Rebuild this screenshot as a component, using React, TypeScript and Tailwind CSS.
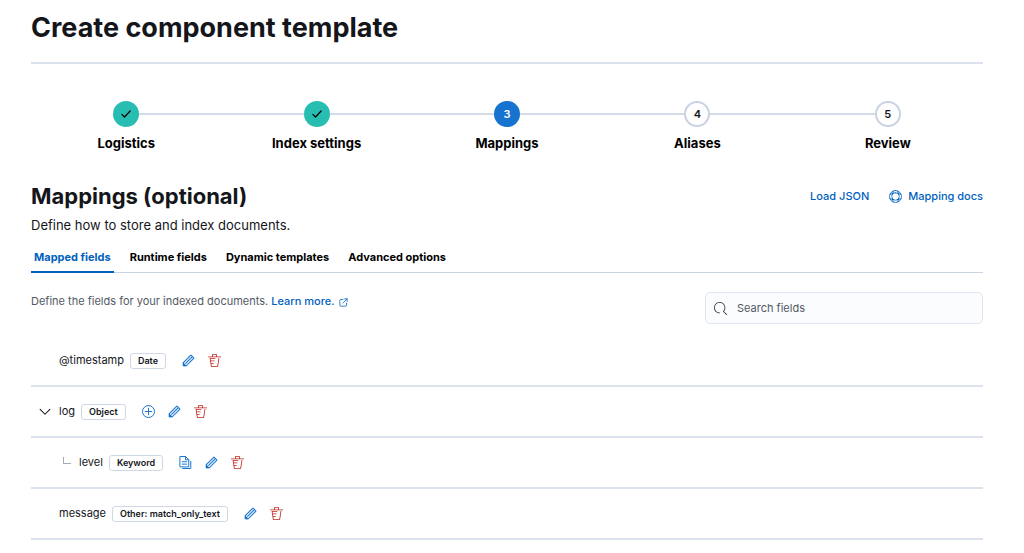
import { useState } from "react";

const paths = {
  trash:
    "M11 3h5v1H0V3h5V1a1 1 0 0 1 1-1h4a1 1 0 0 1 1 1v2zm-7.056 8H7v1H4.1l.392 2.519c.042.269.254.458.493.458h6.03c.239 0 .451-.189.493-.458l1.498-9.576H14l-1.504 9.73c-.116.747-.74 1.304-1.481 1.304h-6.03c-.741 0-1.365-.557-1.481-1.304l-1.511-9.73H9V5.95H3.157L3.476 8H8v1H3.632l.312 2zM6 3h4V1H6v2z",
  pencil:
    "M12.148 3.148L11 2l-9 9v3h3l9-9-1.144-1.144-8.002 7.998a.502.502 0 01-.708 0 .502.502 0 010-.708l8.002-7.998zM11 1c.256 0 .512.098.707.293l3 3a.999.999 0 010 1.414l-9 9A.997.997 0 015 15H2a1 1 0 01-1-1v-3c0-.256.098-.512.293-.707l9-9A.997.997 0 0111 1zM5 14H2v-3l3 3z",
  search:
    "M11.271 11.978l3.872 3.873a.502.502 0 00.708 0 .502.502 0 000-.708l-3.565-3.564c2.38-2.747 2.267-6.923-.342-9.532-2.73-2.73-7.17-2.73-9.898 0-2.728 2.729-2.728 7.17 0 9.9a6.955 6.955 0 004.949 2.05.5.5 0 000-1 5.96 5.96 0 01-4.242-1.757 6.01 6.01 0 010-8.486 6.004 6.004 0 018.484 0 6.01 6.01 0 010 8.486.5.5 0 00.034.738z",
};

const strokes = {
  plus: "M8 .6a7.4 7.4 0 1 0 0 14.8a7.4 7.4 0 1 0 0-14.8M8 4v8M4 8h8",
  documents: "M1.6.6h6.4l4 4v8.8H1.6zM8 .6v4h4M4 7h5.5M4 10h5.5M4.5 15.4h10V6.5",
  help: "M8 .6a7.4 7.4 0 1 0 0 14.8a7.4 7.4 0 1 0 0-14.8M8 3.4a4.6 4.6 0 1 0 0 9.2a4.6 4.6 0 1 0 0-9.2M5.2 1.4L4 5.5M1.4 5.2L5.5 4M10.8 1.4L12 5.5M14.6 5.2L10.5 4M5.2 14.6L4 10.5M1.4 10.8L5.5 12M10.8 14.6L12 10.5M14.6 10.8L10.5 12",
  popout: "M7 2.5H3A1.5 1.5 0 0 0 1.5 4v9A1.5 1.5 0 0 0 3 14.5h9a1.5 1.5 0 0 0 1.5-1.5V9M10 1.5h4.5V6M14.5 1.5L7 9",
  chevron: "M1.5 4.5L8 11l6.5-6.5",
  check: "M2.5 8.5l3.5 3.5 7.5-8",
};

function Icon({ name, className }: { name: keyof typeof paths; className: string }) {
  return (
    <svg
      viewBox="0 0 16 16"
      className={className}
      fill="currentColor"
      stroke="currentColor"
      strokeWidth={name === "pencil" ? 0.3 : 0}
      aria-hidden="true"
    >
      <path fillRule="evenodd" d={paths[name]} />
    </svg>
  );
}

function LineIcon({
  name,
  className,
  width = 1.2,
}: {
  name: keyof typeof strokes;
  className: string;
  width?: number;
}) {
  return (
    <svg
      viewBox="0 0 16 16"
      className={className}
      fill="none"
      stroke="currentColor"
      strokeWidth={width}
      strokeLinecap="round"
      strokeLinejoin="round"
      aria-hidden="true"
    >
      <path d={strokes[name]} />
    </svg>
  );
}

const steps = [
  { label: "Logistics", status: "complete" },
  { label: "Index settings", status: "complete" },
  { label: "Mappings", status: "current" },
  { label: "Aliases", status: "incomplete" },
  { label: "Review", status: "incomplete" },
];

const stepTones: Record<string, string> = {
  complete: "bg-[#27bdb1] text-black",
  current: "bg-[#1673cf] text-white",
  incomplete: "border-2 border-[#cad3e2] bg-white text-[#14161c]",
};

const tabs = ["Mapped fields", "Runtime fields", "Dynamic templates", "Advanced options"];

const fields = [
  { name: "@timestamp", type: "Date" },
  { name: "log", type: "Object", expandable: true },
  { name: "level", type: "Keyword", child: true },
  { name: "message", type: "Other: match_only_text" },
];

function Stepper() {
  return (
    <ol className="grid grid-cols-5 pt-[37px] text-black">
      {steps.map((step, i) => (
        <li key={step.label}>
          <button type="button" className="flex w-full flex-col items-center">
            <span className="flex w-full items-center">
              <span className={`h-0.5 flex-1 ${i > 0 ? "bg-[#d3dbe8]" : ""}`} />
              <span
                className={`flex size-[26px] items-center justify-center rounded-full text-[11px] font-semibold ${stepTones[step.status]}`}
              >
                {step.status === "complete" ? (
                  <LineIcon name="check" className="size-3" width={1.6} />
                ) : (
                  i + 1
                )}
              </span>
              <span className={`h-0.5 flex-1 ${i < steps.length - 1 ? "bg-[#d3dbe8]" : ""}`} />
            </span>
            <span className="mt-1.5 text-[13px] leading-5 font-bold">{step.label}</span>
          </button>
        </li>
      ))}
    </ol>
  );
}

function FieldRow({ name, type, expandable, child }: (typeof fields)[number]) {
  return (
    <li className="flex h-[51px] items-center border-b-2 border-[#dce3ec]">
      <span className={`flex shrink-0 items-center ${child ? "w-12 pl-8" : "w-7 pl-2"}`}>
        {expandable && (
          <button type="button" aria-label={`Collapse ${name}`}>
            <LineIcon name="chevron" className="size-3" width={1.4} />
          </button>
        )}
        {child && <span className="mb-1 h-[7px] w-2 border-b border-l border-[#a4abb8]" />}
      </span>
      <span className="text-[11px]">{name}</span>
      <span className="ml-1.5 rounded-[3px] border border-[#d0d8e6] px-[7px] text-[9px] leading-[14px] font-semibold">
        {type}
      </span>
      <span className="ml-4 flex items-center gap-[13px] text-[#1673cf]">
        {expandable && (
          <button type="button" aria-label={`Add field to ${name}`}>
            <LineIcon name="plus" className="size-[13px]" />
          </button>
        )}
        {child && (
          <button type="button" aria-label={`Add multi-field to ${name}`}>
            <LineIcon name="documents" className="size-[13px]" />
          </button>
        )}
        <button type="button" aria-label={`Edit ${name}`}>
          <Icon name="pencil" className="size-[13px]" />
        </button>
        <button type="button" aria-label={`Delete ${name}`} className="text-[#bd271e]">
          <Icon name="trash" className="size-[13px]" />
        </button>
      </span>
    </li>
  );
}

export default function App() {
  const [activeTab, setActiveTab] = useState(tabs[0]);
  const [query, setQuery] = useState("");

  return (
    <main className="bg-white pr-[41px] pl-[31px] font-['Inter',sans-serif] text-[#14161c]">
      <h1 className="border-b-2 border-[#dce3ec] pt-2 pb-[15px] text-[27px] leading-[39px] font-bold">
        Create component template
      </h1>

      <Stepper />

      <div className="mt-[29px] flex items-center justify-between">
        <h2 className="text-[22px] leading-7 font-bold">Mappings (optional)</h2>
        <div className="flex items-center gap-5 text-[11px] font-medium text-[#0061bd]">
          <button type="button">Load JSON</button>
          <a href="#mapping-docs" className="flex items-center gap-1.5">
            <LineIcon name="help" className="size-[13px]" width={1} />
            Mapping docs
          </a>
        </div>
      </div>
      <p className="mt-[5px] text-[13px] leading-5">Define how to store and index documents.</p>

      <div role="tablist" className="mt-2 flex gap-[13px] border-b border-[#cad3e2] text-black">
        {tabs.map((tab) => (
          <button
            key={tab}
            type="button"
            role="tab"
            aria-selected={tab === activeTab}
            onClick={() => setActiveTab(tab)}
            className={`-mb-px border-b-2 px-[3px] py-1 text-[11px] leading-5 font-bold ${
              tab === activeTab ? "border-[#0061bd] text-[#0061bd]" : "border-transparent"
            }`}
          >
            {tab}
          </button>
        ))}
      </div>

      <div className="mt-[19px] flex items-start justify-between">
        <p className="text-[11px] leading-[18px] text-[#535966]">
          Define the fields for your indexed documents.{" "}
          <a href="#learn-more" className="font-medium text-[#0061bd]">
            Learn more.
            <LineIcon name="popout" className="ml-1 inline size-[9px]" width={1.4} />
          </a>
        </p>
        <label className="flex h-8 w-[278px] items-center gap-2.5 rounded-[5px] border border-[#dfe4f0] bg-[#fbfcfd] px-2">
          <Icon name="search" className="size-[13px] shrink-0 text-[#343741]" />
          <input
            type="text"
            aria-label="Search fields"
            placeholder="Search fields"
            value={query}
            onChange={(e) => setQuery(e.target.value)}
            className="min-w-0 flex-1 bg-transparent text-[11px] outline-none placeholder:text-[#535966]"
          />
        </label>
      </div>

      <ul className="mt-3">
        {fields.map((field) => (
          <FieldRow key={field.name} {...field} />
        ))}
      </ul>
    </main>
  );
}
